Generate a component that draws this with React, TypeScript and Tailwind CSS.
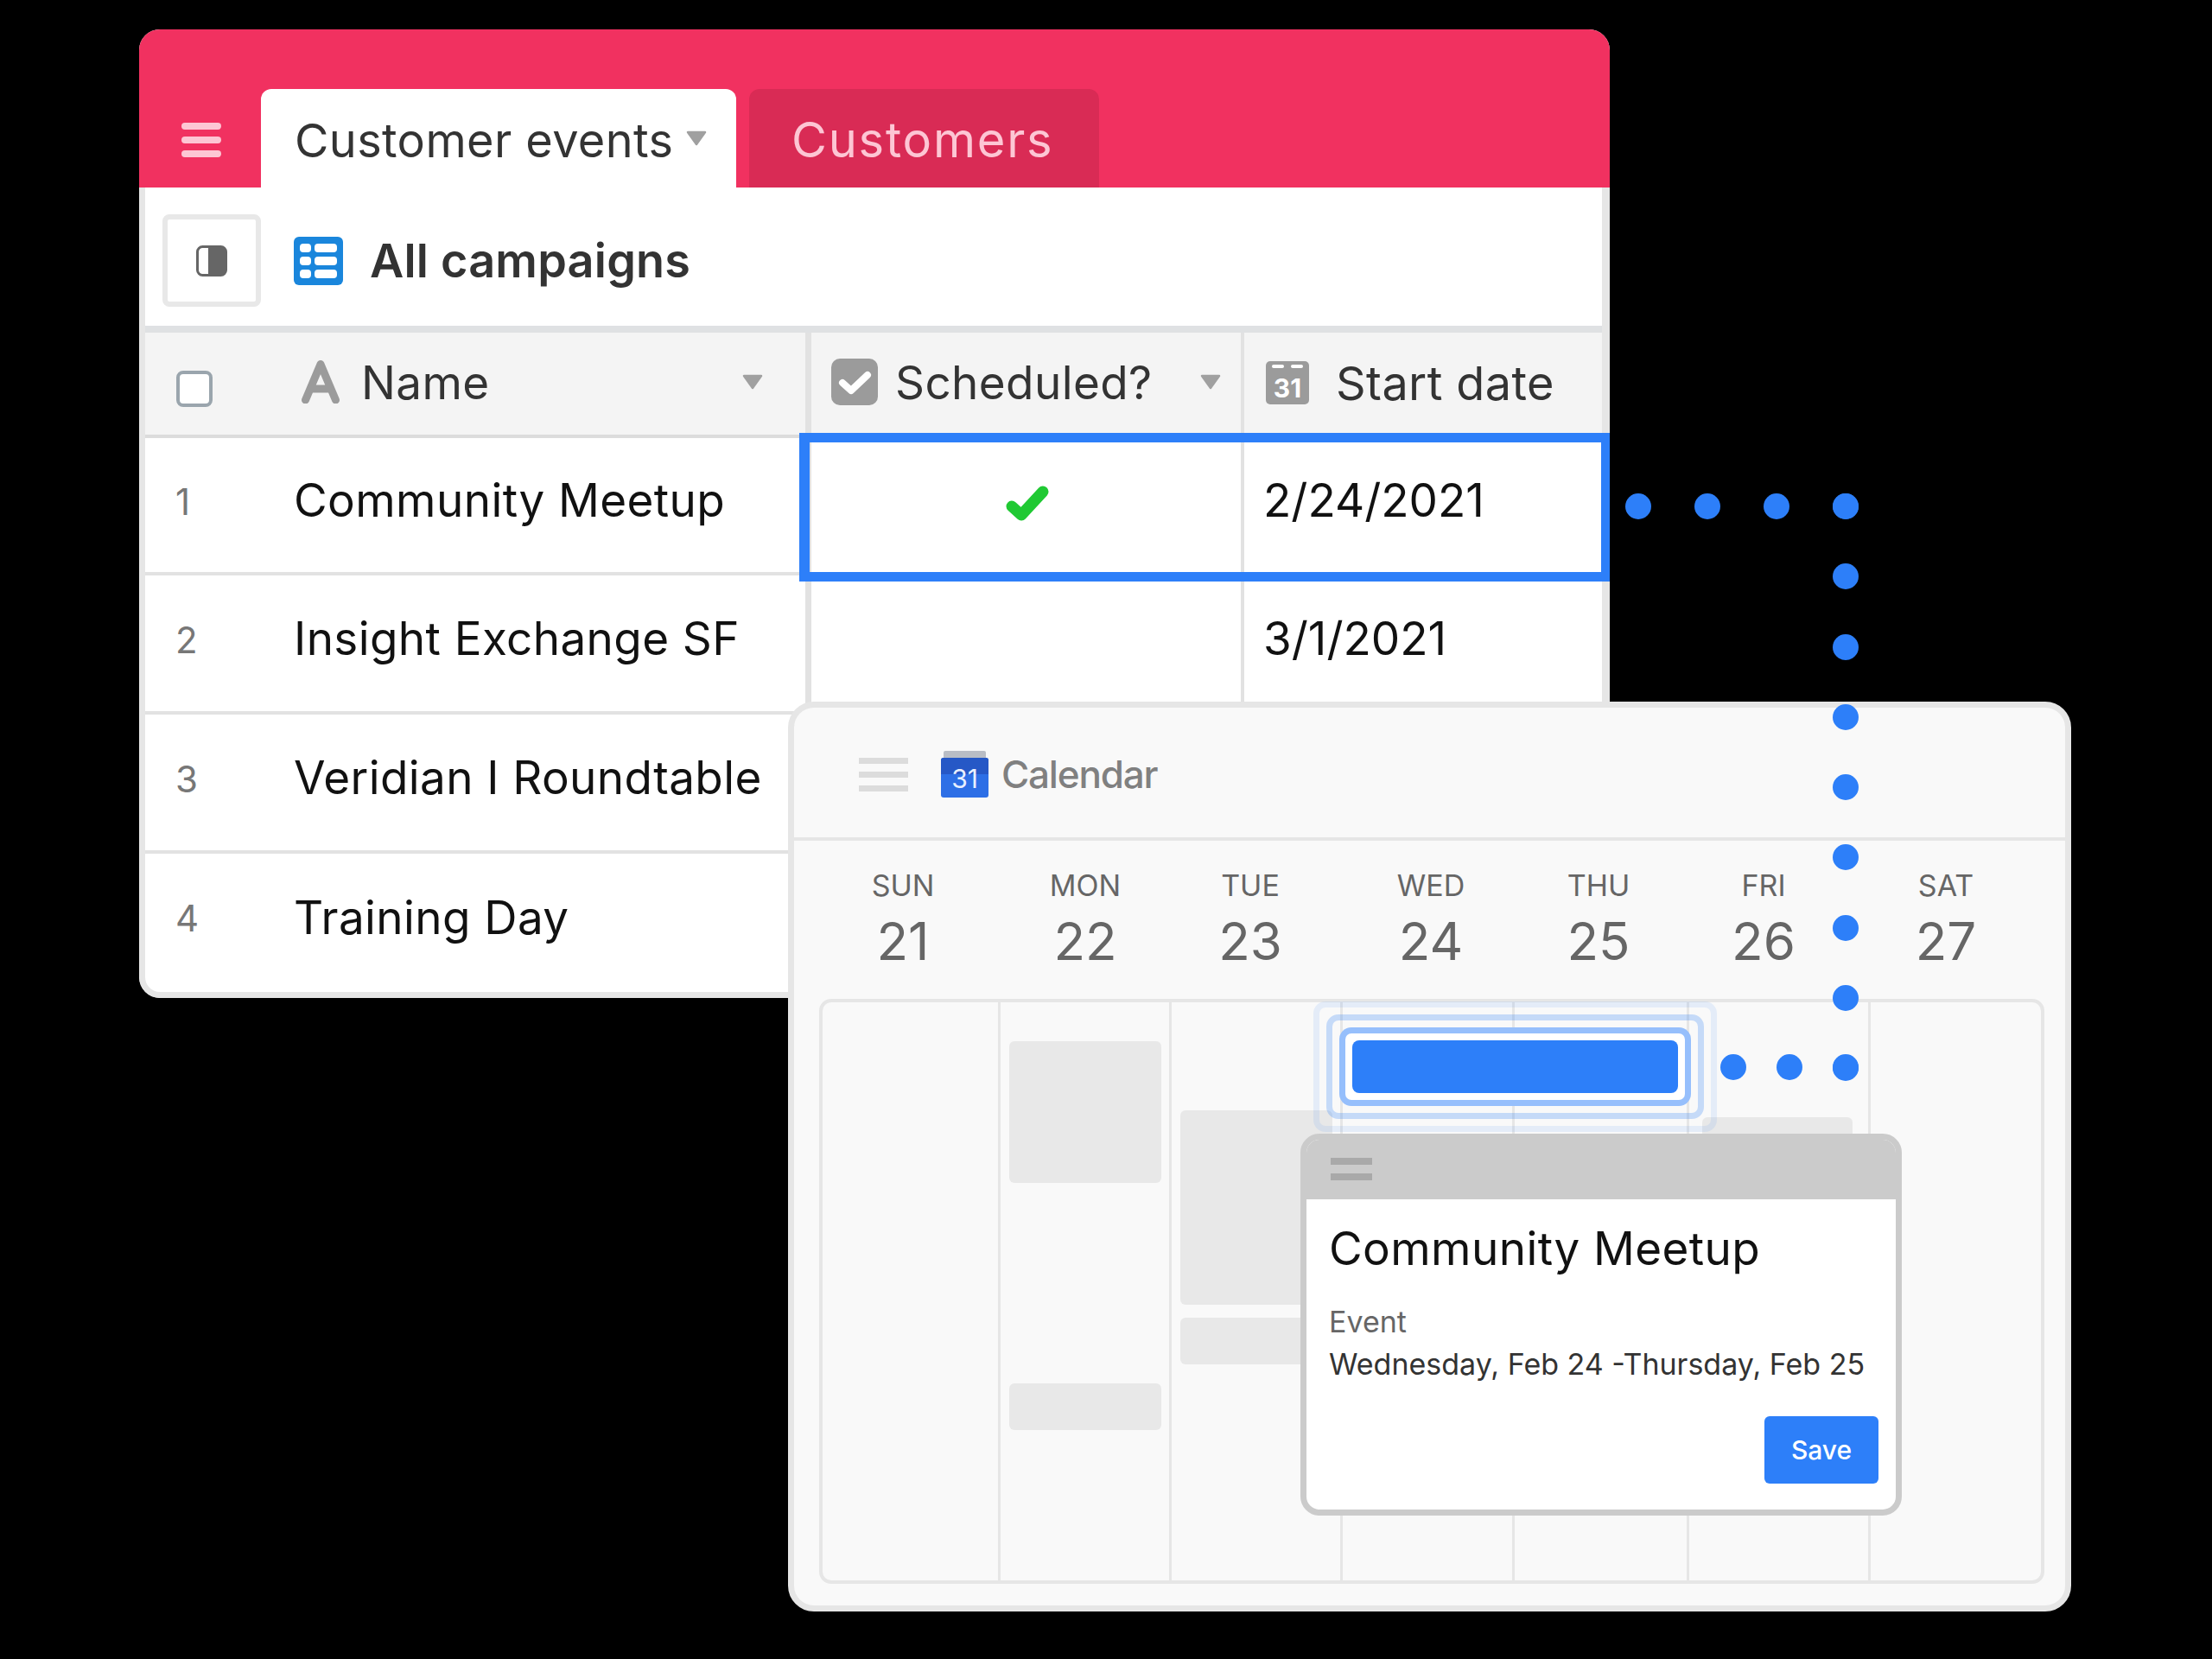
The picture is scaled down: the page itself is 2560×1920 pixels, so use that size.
import React from "react";

const BLUE = "bg-[#2d7ff9]";

function Tri({ className }: { className: string }) {
  return (
    <svg viewBox="0 0 24 18" className={className}>
      <path d="M2 2 H22 L12 16 Z" fill="#a0a0a0" stroke="#a0a0a0" strokeWidth="2.5" strokeLinejoin="round" />
    </svg>
  );
}

function Dot() {
  return <div className={`h-[30px] w-[30px] shrink-0 rounded-full ${BLUE}`} />;
}

function TableRow({ n, name, date, last }: { n: number; name: string; date?: string; last?: boolean }) {
  const h = n === 1 ? "h-[159px]" : "h-[161px]";
  const b = last ? "" : "border-b-[4px] border-[#e2e2e2]";
  const p = last ? "pb-[12px]" : "pb-[9px]";
  return (
    <div className={`flex ${h} w-full shrink-0`}>
      <div className={`flex w-[764px] shrink-0 items-center ${p} ${b}`}>
        <div className="w-[172px] shrink-0 pl-[35px] text-[42px] text-[#777]">{n}</div>
        <div className="whitespace-nowrap text-[53px] tracking-[0.4px] text-[#111]">{name}</div>
      </div>
      <div className={`w-[508px] shrink-0 border-r-[4px] border-l-[7px] border-x-[#e2e2e2] ${b}`} />
      <div className={`flex flex-1 items-center ${p} pl-[22px] text-[53px] text-[#111] ${b}`}>{date}</div>
    </div>
  );
}

function DayHead({ d, n, w }: { d: string; n: number; w: string }) {
  return (
    <div className={`flex ${w} shrink-0 flex-col items-center pt-[30px] text-[#666]`}>
      <div className="text-[34px] leading-[44px]">{d}</div>
      <div className="mt-[10px] text-[60px] leading-[64px]">{n}</div>
    </div>
  );
}

export default function App() {
  return (
    <div className="relative h-[1920px] w-[2560px] overflow-hidden bg-black [font-family:Inter,'Noto_Sans',sans-serif]">
      {/* Table window */}
      <div className="absolute left-[161px] top-[34px] flex h-[1121px] w-[1702px] flex-col overflow-hidden rounded-[24px] bg-white">
        <div className="flex h-[183px] shrink-0 items-end bg-[#f13160]">
          <div className="flex h-[114px] w-[141px] flex-col items-center gap-[8px] pl-[2px] pt-[39px]">
            <div className="h-[8px] w-[46px] rounded-full bg-[#fdc6d4]" />
            <div className="h-[8px] w-[46px] rounded-full bg-[#fdc6d4]" />
            <div className="h-[8px] w-[46px] rounded-full bg-[#fdc6d4]" />
          </div>
          <div className="flex h-[114px] w-[550px] items-center rounded-t-[12px] bg-white pl-[39px] pt-[4px]">
            <span className="whitespace-nowrap text-[54px] tracking-[0.4px] text-[#333]">Customer events</span>
            <Tri className="ml-[15px] mt-[-4px] h-[20px] w-[24px]" />
          </div>
          <div className="ml-[15px] flex h-[114px] w-[405px] items-center rounded-t-[12px] bg-[#d92b55] pl-[49px] pt-[4px]">
            <span className="whitespace-nowrap text-[56px] tracking-[1.8px] text-[#fdc6d4]">Customers</span>
          </div>
        </div>
        <div className="flex min-h-0 flex-1 flex-col rounded-b-[24px] border-x-[7px] border-b-[7px] border-x-[#e6e6e6] border-b-[#e6e6e6] border-r-[9px]">
          <div className="flex h-[160px] shrink-0 items-center pl-[20px] pt-[9px]">
            <div className="flex h-[107px] w-[114px] shrink-0 items-center justify-center rounded-[8px] border-[6px] border-[#e8e8e8]">
              <svg viewBox="0 0 36 36" className="h-[36px] w-[36px]">
                <rect x="1.5" y="1.5" width="33" height="33" rx="6" fill="#fff" stroke="#666" strokeWidth="3" />
                <path d="M14 1.5 H29 a6 6 0 0 1 6 6 V29 a6 6 0 0 1 -6 6 H14 Z" fill="#666" />
              </svg>
            </div>
            <svg viewBox="0 0 57 56" className="ml-[38px] h-[56px] w-[57px] shrink-0">
              <rect width="57" height="56" rx="6" fill="#1a86dc" />
              <rect x="7" y="8" width="13" height="10" rx="4" fill="#fff" />
              <rect x="24" y="8" width="26" height="10" rx="4" fill="#fff" />
              <rect x="7" y="23" width="13" height="10" rx="4" fill="#fff" />
              <rect x="24" y="23" width="26" height="10" rx="4" fill="#fff" />
              <rect x="7" y="38" width="13" height="10" rx="4" fill="#fff" />
              <rect x="24" y="38" width="26" height="10" rx="4" fill="#fff" />
            </svg>
            <span className="ml-[31px] whitespace-nowrap text-[54px] font-semibold tracking-[0.2px] text-[#333]">All campaigns</span>
          </div>
          <div className="flex h-[130px] shrink-0 border-t-[8px] border-b-[4px] border-t-[#dfe1e3] border-b-[#dcdcdc] bg-[#f4f4f4]">
            <div className="flex w-[764px] shrink-0 items-center">
              <div className="ml-[36px] mt-[11px] h-[42px] w-[42px] rounded-[8px] border-[4px] border-[#9aa5ad] bg-white" />
              <svg viewBox="0 0 44 50" className="ml-[103px] mt-[-4px] h-[50px] w-[44px]">
                <path d="M4.5 46 L22 4.5 L39.5 46 M11 33 H33" fill="none" stroke="#9b9b9b" strokeWidth="9" strokeLinecap="round" strokeLinejoin="round" />
              </svg>
              <span className="ml-[25px] text-[53px] tracking-[0.4px] text-[#333]">Name</span>
              <Tri className="ml-[292px] mt-[-4px] h-[18px] w-[24px]" />
            </div>
            <div className="flex w-[508px] shrink-0 items-center border-r-[4px] border-l-[7px] border-x-[#e2e2e2] pl-[23px]">
              <svg viewBox="0 0 54 54" className="mt-[-4px] h-[54px] w-[54px] shrink-0">
                <rect width="54" height="54" rx="10" fill="#9b9b9b" />
                <path d="M13 28 L23 37 L42 19" fill="none" stroke="#fff" strokeWidth="8" strokeLinecap="round" strokeLinejoin="round" />
              </svg>
              <span className="ml-[20px] whitespace-nowrap text-[53px] tracking-[0.4px] text-[#333]">Scheduled?</span>
              <Tri className="ml-[55px] mt-[-4px] h-[18px] w-[24px]" />
            </div>
            <div className="flex flex-1 items-center pl-[25px]">
              <svg viewBox="0 0 50 50" className="mt-[-2px] h-[50px] w-[50px] shrink-0">
                <rect width="50" height="50" rx="5" fill="#9b9b9b" />
                <rect x="7" y="4" width="14" height="4" rx="2" fill="#fff" />
                <rect x="29" y="4" width="14" height="4" rx="2" fill="#fff" />
                <text x="25" y="42" textAnchor="middle" fontSize="30" fontWeight="700" fill="#fff" fontFamily="Inter, sans-serif">31</text>
              </svg>
              <span className="mb-[2px] ml-[31px] whitespace-nowrap text-[54px] tracking-[0.4px] text-[#333]">Start date</span>
            </div>
          </div>
          <TableRow n={1} name="Community Meetup" date="2/24/2021" />
          <TableRow n={2} name="Insight Exchange SF" date="3/1/2021" />
          <TableRow n={3} name="Veridian I Roundtable" />
          <TableRow n={4} name="Training Day" last />
        </div>
        {/* Selected range */}
        <div className="absolute left-[764px] top-[467px] flex h-[172px] w-[938px] items-center border-y-[11px] border-r-[10px] border-l-[12px] border-[#2d7ff9] pb-[9px] pl-[227px]">
          <svg viewBox="0 0 50 41" className="h-[41px] w-[50px]">
            <path d="M7 24 L18 34 L43 7" fill="none" stroke="#20c933" strokeWidth="13" strokeLinecap="round" strokeLinejoin="round" />
          </svg>
        </div>
      </div>

      {/* Calendar window */}
      <div className="absolute left-[912px] top-[812px] flex h-[1053px] w-[1485px] flex-col overflow-hidden rounded-[30px] border-[7px] border-[#e6e6e6] bg-[#f9f9f9]">
        <div className="flex h-[154px] shrink-0 items-center border-b-[4px] border-[#e6e6e6] pt-[4px] pl-[75px]">
          <div className="flex w-[57px] flex-col gap-[9px]">
            <div className="h-[7px] bg-[#dcdcdc]" />
            <div className="h-[7px] bg-[#dcdcdc]" />
            <div className="h-[7px] bg-[#dcdcdc]" />
          </div>
          <svg viewBox="0 0 55 54" className="ml-[38px] h-[54px] w-[55px]">
            <rect x="3" y="0" width="49" height="12" rx="2" fill="#b9bdc5" />
            <rect x="0" y="8" width="55" height="46" rx="3" fill="#2d6fe6" />
            <path d="M0 11 a3 3 0 0 1 3 -3 H52 a3 3 0 0 1 3 3 V27 H0 Z" fill="#2658c6" />
            <text x="27.5" y="43" textAnchor="middle" fontSize="30" fill="#e8f0ff" fontFamily="Inter, sans-serif">31</text>
          </svg>
          <span className="ml-[15px] text-[44px] font-medium tracking-[-1.2px] text-[#808080]">Calendar</span>
        </div>
        <div className="flex h-[183px] shrink-0 pl-[29px]">
          <DayHead d="SUN" n={21} w="w-[194px]" />
          <DayHead d="MON" n={22} w="w-[228px]" />
          <DayHead d="TUE" n={23} w="w-[154px]" />
          <DayHead d="WED" n={24} w="w-[264px]" />
          <DayHead d="THU" n={25} w="w-[124px]" />
          <DayHead d="FRI" n={26} w="w-[258px]" />
          <DayHead d="SAT" n={27} w="w-[164px]" />
        </div>
        <div className="ml-[29px] mr-[24px] grid h-[677px] grid-cols-[206px_198px_198px_199px_202px_210px_1fr] rounded-[14px] border-[4px] border-[#e6e6e6]">
          <div className="border-r-[3px] border-[#e6e6e6]" />
          <div className="flex flex-col border-r-[3px] border-[#e6e6e6] pl-[10px] pt-[45px]">
            <div className="h-[164px] w-[176px] rounded-[6px] bg-[#e8e8e8]" />
            <div className="mt-[232px] h-[54px] w-[176px] rounded-[6px] bg-[#e8e8e8]" />
          </div>
          <div className="flex flex-col border-r-[3px] border-[#e6e6e6] pl-[10px] pt-[125px]">
            <div className="h-[225px] w-[176px] rounded-[6px] bg-[#e8e8e8]" />
            <div className="mt-[15px] h-[54px] w-[176px] rounded-[6px] bg-[#e8e8e8]" />
          </div>
          <div className="border-r-[3px] border-[#e6e6e6]" />
          <div className="border-r-[3px] border-[#e6e6e6]" />
          <div className="border-r-[3px] border-[#e6e6e6] pl-[15px] pt-[133px]">
            <div className="h-[60px] w-[174px] rounded-[6px] bg-[#e8e8e8]" />
          </div>
          <div />
        </div>
      </div>

      {/* Event with focus rings */}
      <div className="absolute left-[1520px] top-[1159px] rounded-[14px] border-[7px] border-[#2d7ff9]/10 p-[8px]">
        <div className="rounded-[14px] border-[7px] border-[#2d7ff9]/25 p-[8px]">
          <div className="rounded-[14px] border-[7px] border-[#2d7ff9]/50 bg-white p-[8px]">
            <div className={`h-[61px] w-[377px] rounded-[8px] ${BLUE}`} />
          </div>
        </div>
      </div>

      {/* Popup card */}
      <div className="absolute left-[1505px] top-[1312px] flex h-[442px] w-[696px] flex-col overflow-hidden rounded-[22px] border-[7px] border-[#cbcbcb] bg-white">
        <div className="flex h-[69px] shrink-0 flex-col gap-[10px] bg-[#cbcbcb] pl-[28px] pt-[21px]">
          <div className="h-[8px] w-[48px] bg-[#a9a9a9]" />
          <div className="h-[8px] w-[48px] bg-[#a9a9a9]" />
        </div>
        <div className="flex flex-1 flex-col pl-[26px] pr-[20px]">
          <div className="mt-[24px] whitespace-nowrap text-[53px] leading-[66px] tracking-[0.4px] text-[#111]">Community Meetup</div>
          <div className="mt-[30px] text-[34px] leading-[44px] text-[#666]">Event</div>
          <div className="mt-[5px] whitespace-nowrap text-[34px] leading-[44px] text-[#333]">Wednesday, Feb 24 -Thursday, Feb 25</div>
          <div className="mt-auto mb-[30px] flex justify-end">
            <div className={`flex h-[78px] w-[132px] items-center justify-center rounded-[6px] text-[30px] font-medium text-white ${BLUE}`}>Save</div>
          </div>
        </div>
      </div>

      {/* Connecting dots */}
      <div className="absolute left-[1881px] top-[571px] flex w-[270px] justify-between">
        <Dot /><Dot /><Dot /><Dot />
      </div>
      <div className="absolute left-[2121px] top-[571px] flex h-[680px] flex-col justify-between">
        <Dot /><Dot /><Dot /><Dot /><Dot /><Dot /><Dot /><Dot /><Dot />
      </div>
      <div className="absolute left-[1991px] top-[1220px] flex w-[160px] justify-between">
        <Dot /><Dot /><Dot />
      </div>
    </div>
  );
}
